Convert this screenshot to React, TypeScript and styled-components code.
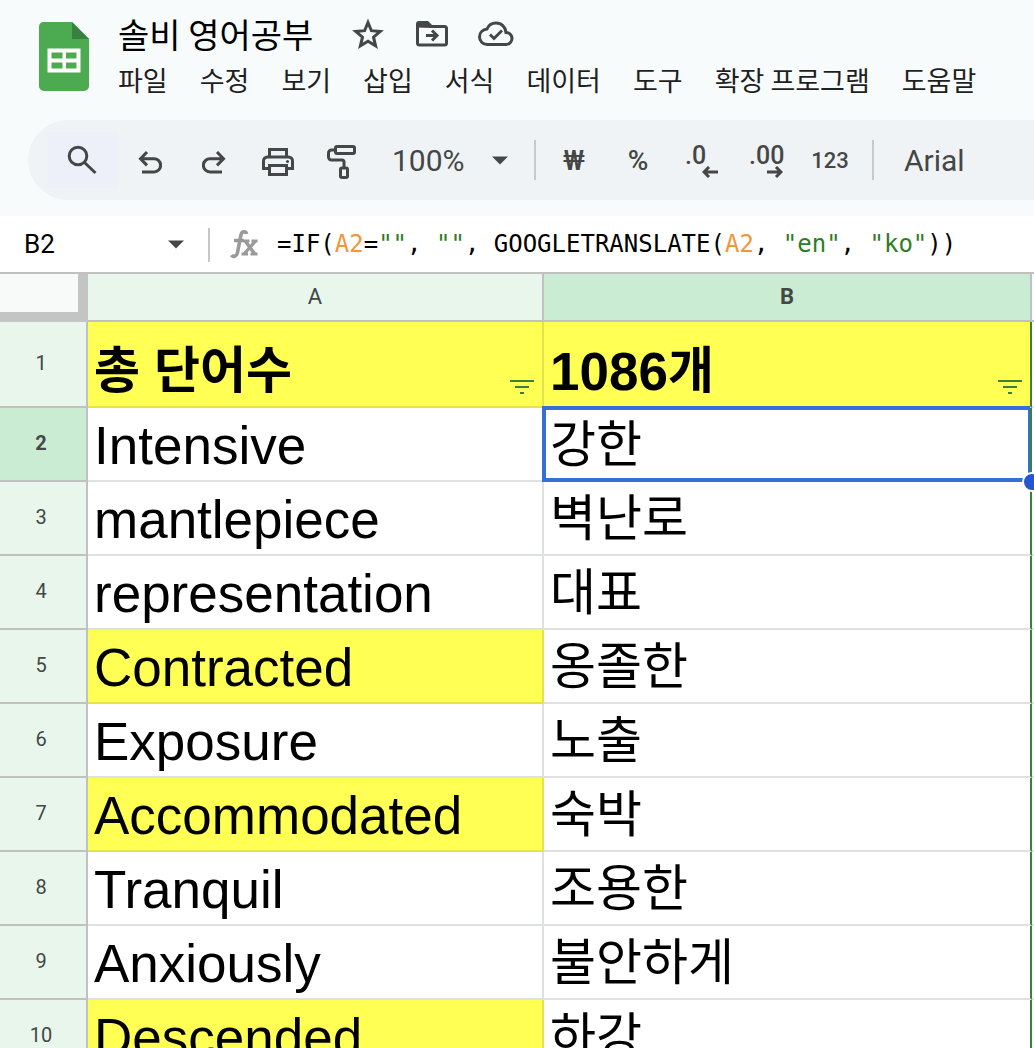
import React from "react";
import styled, { createGlobalStyle, css } from "styled-components";

const korean = `"Noto Sans CJK KR", sans-serif`;
const ui = `Roboto, "Noto Sans CJK KR", sans-serif`;
const ink = "#444746";
const line = "#c0c0c0";

const GlobalStyle = createGlobalStyle`
  *, *::before, *::after { box-sizing: border-box; }
  body { margin: 0; background: #fff; font-family: ${ui}; }
  button, input, select { font: inherit; color: inherit; }
  svg { display: block; flex: none; }
`;

const Page = styled.div`
  display: flex;
  flex-direction: column;
  height: 100vh;
  overflow: hidden;
`;

const Top = styled.header`
  flex: none;
  background: #f8fbfc;
  padding-bottom: 16px;
`;

const TitleBar = styled.div`
  display: flex;
  gap: 28px;
  height: 120px;
  padding: 22px 0 0 38px;
`;

const HomeLink = styled.a`
  display: block;
  height: 70px;
`;

const TitleColumn = styled.div`
  display: flex;
  flex-direction: column;
  margin-top: -11px;
`;

const TitleRow = styled.div`
  display: flex;
  align-items: center;
  height: 46px;
`;

const TitleInput = styled.input`
  width: 218px;
  height: 46px;
  padding: 0;
  border: 0;
  background: transparent;
  color: #000;
  font: 34px/46px ${korean};
`;

const plain = css`
  display: flex;
  align-items: center;
  justify-content: center;
  flex: none;
  padding: 0;
  border: 0;
  background: transparent;
  color: ${ink};
  cursor: pointer;
`;

const TitleButton = styled.button`
  ${plain}
  width: 64px;
  height: 46px;
`;

const Menu = styled.nav`
  display: flex;
  gap: 32px;
  height: 46px;
`;

const MenuButton = styled.button`
  ${plain}
  color: #1f1f1f;
  font: 27px/46px ${korean};
  white-space: nowrap;
`;

const Toolbar = styled.div`
  display: flex;
  align-items: center;
  height: 80px;
  margin-left: 28px;
  padding-left: 20px;
  border-radius: 40px 0 0 40px;
  background: #f0f3f5;
  color: ${ink};
  overflow: hidden;
`;

const Tool = styled.button<{ $search?: boolean; $size?: number }>`
  ${plain}
  width: ${(p) => (p.$search ? 70 : 64)}px;
  height: 56px;
  background: ${(p) => (p.$search ? "#eef0f9" : "transparent")};
  font-size: ${(p) => p.$size ?? 24}px;
  font-weight: 500;
`;

const IconTool = styled(Tool)`
  padding-top: 4px;
`;

const Divider = styled.span`
  flex: none;
  width: 2px;
  height: 40px;
  margin: 0 6px 0 10px;
  background: #c7c9cb;
`;

const Picker = styled.label<{ $indent: number; $size: number }>`
  display: grid;
  align-items: center;
  flex: none;
  width: 150px;
  padding-left: ${(p) => p.$indent}px;
  font-size: ${(p) => p.$size}px;

  > * { grid-area: 1 / 1; }
  > svg { justify-self: end; margin-right: 16px; pointer-events: none; }
`;

const Select = styled.select`
  appearance: none;
  width: 100%;
  height: 56px;
  padding: 0;
  border: 0;
  background: transparent;
  color: ${ink};
  cursor: pointer;
`;

const Decimal = styled.span`
  display: flex;
  flex-direction: column;
  width: 34px;
  padding-top: 4px;
  font-size: 25px;
  line-height: 20px;
  text-align: left;

  > svg { align-self: flex-end; }
`;

const FormulaBar = styled.div`
  display: flex;
  align-items: center;
  flex: none;
  height: 58px;
  border-bottom: 2px solid ${line};
  background: #fff;
`;

const NameBox = styled.input`
  width: 160px;
  height: 56px;
  padding: 0 0 0 24px;
  border: 0;
  background: transparent;
  color: #000;
  font-size: 26px;
`;

const NameButton = styled.button`
  ${plain}
  width: 32px;
  height: 56px;
`;

const FormulaDivider = styled.span`
  width: 2px;
  height: 34px;
  margin: 2px 20px 0 16px;
  background: #c7c7c7;
`;

const Formula = styled.div`
  margin-left: 19px;
  color: #000;
  font: 24px/56px "DejaVu Sans Mono", monospace;
  white-space: pre;
  outline: none;
`;

const Ref = styled.span`
  color: #f1963a;
`;

const Str = styled.span`
  color: #2e7d1f;
`;

const Sheet = styled.main`
  flex: 1;
  min-height: 0;
  overflow: hidden;
`;

const Table = styled.table`
  width: 100%;
  table-layout: fixed;
  border-collapse: separate;
  border-spacing: 0;
`;

const Col = styled.col<{ $width?: number }>`
  width: ${(p) => (p.$width ? `${p.$width}px` : "auto")};
`;

const Corner = styled.td`
  height: 48px;
  padding: 0;
  border: solid #c4c4c4;
  border-width: 0 10px 10px 0;
  background: #f8f9f9;
`;

const Head = styled.th<{ $active?: boolean }>`
  padding: 0;
  border: solid ${line};
  border-width: 0 2px 2px 0;
  background: ${(p) => (p.$active ? "#caecd2" : "#e8f6ec")};
  color: ${ink};
  font-weight: ${(p) => (p.$active ? 700 : 400)};
`;

const ColumnHead = styled(Head)`
  height: 48px;
  padding-bottom: 2px;
  font-size: 22px;
`;

const RowHead = styled(Head)`
  padding: 0 4px 2px 0;
  font-size: 20px;
`;

const HeadRest = styled.td`
  padding: 0;
  border-bottom: 2px solid ${line};
  background: #f8fbfc;
`;

const CellRest = styled.td`
  padding: 0;
  border-bottom: 2px solid #dfe0e0;
`;

const Cell = styled.td<{ $yellow?: boolean; $filterEdge?: boolean }>`
  position: relative;
  padding: 0 0 0 6px;
  border: solid ${(p) => (p.$yellow ? "#e3e34c" : "#dfe0e0")};
  border-width: 0 2px 2px 0;
  border-right-color: ${(p) => (p.$filterEdge ? "#3c7f3a" : p.$yellow ? "#e3e34c" : "#dfe0e0")};
  background: ${(p) => (p.$yellow ? "#ffff54" : "#fff")};
`;

const Content = styled.div<{ $header?: boolean }>`
  display: flex;
  align-items: flex-end;
  justify-content: space-between;
  height: ${(p) => (p.$header ? 84 : 72)}px;
  color: #000;
  font-family: "Liberation Sans", "Noto Sans CJK KR", sans-serif;
  font-size: 53px;
  font-weight: ${(p) => (p.$header ? 700 : 400)};
  line-height: 60px;
  white-space: nowrap;
`;

const CellText = styled.span`
  height: 64px;
`;

const Hangul = styled.span`
  font-size: 50px;
  line-height: 1;
  vertical-align: 2px;
`;

const FilterButton = styled.button`
  ${plain}
  width: 24px;
  height: 16px;
  margin: 0 8px 11px 0;
`;

const Selection = styled.div`
  position: absolute;
  z-index: 1;
  inset: -2px 0 -2px -2px;
  border: 4px solid #3570d8;
  border-right-width: 2px;
  pointer-events: none;
`;

const FillHandle = styled.div`
  position: absolute;
  z-index: 2;
  right: -12px;
  bottom: -12px;
  width: 20px;
  height: 20px;
  border: 2px solid #fff;
  border-radius: 50%;
  background: #2158cf;
`;

const SheetsLogo = () => (
  <svg width="52" height="69" viewBox="0 0 52 69" aria-hidden="true">
    <path d="M5 0H34L51 17V64a5 5 0 0 1-5 5H6a5 5 0 0 1-5-5V5a5 5 0 0 1 4-5Z" fill="#4caa50" />
    <path d="M34 0L51 17H34Z" fill="#388140" />
    <path
      fillRule="evenodd"
      fill="#fff"
      d="M9.500 26.500h33v24h-33zM13.500 30.500v6h11v-6zM28 30.500v6h10.500v-6zM13.500 40.500v6h11v-6zM28 40.500v6h10.500v-6z"
    />
  </svg>
);

const StarIcon = () => (
  <svg width="32" height="32" viewBox="0 0 32 32" fill="none" stroke="currentColor" strokeWidth="3">
    <path d="M16 4.500l3.400 8.200 8.800.8-6.700 5.700 2.100 8.600-7.600-4.600-7.600 4.600 2.100-8.600-6.700-5.700 8.800-.8z" />
  </svg>
);

const MoveIcon = () => (
  <svg width="32" height="26" viewBox="0 0 32 26" fill="none" stroke="currentColor" strokeWidth="3">
    <path d="M1.500 5V22a2 2 0 0 0 2 2H28.500a2 2 0 0 0 2-2V7.500a2 2 0 0 0-2-2H15" />
    <path d="M0 6.500V3a3 3 0 0 1 3-3h9l4 4v3z" fill="currentColor" stroke="none" />
    <path d="M10 14.500h10M16 9.500l5 5-5 5" />
  </svg>
);

const CloudIcon = () => (
  <svg width="36" height="26" viewBox="0 0 36 26" fill="none" stroke="currentColor" strokeWidth="3">
    <path d="M9 23.500h19a6 6 0 0 0 6-6c0-3.500-2.500-5.800-6-6-.5-5.500-4.500-9.500-10-9.500-4 0-7.500 2.300-9 6-4.200.6-7.500 3.500-7.500 7.700 0 4.500 3.300 7.800 7.500 7.800z" />
    <path d="M12 13.500l4 4 8-8" />
  </svg>
);

const SearchIcon = () => (
  <svg width="32" height="30" viewBox="0 0 32 30" fill="none" stroke="currentColor" strokeWidth="3">
    <circle cx="11" cy="11" r="8.800" />
    <path d="M17.500 17.500L28.500 28" />
  </svg>
);

const UndoIcon = ({ flip }: { flip?: boolean }) => (
  <svg width="24" height="26" viewBox="0 0 24 26" fill="none" stroke="currentColor" strokeWidth="3">
    <g transform={flip ? "translate(24 0) scale(-1 1)" : undefined}>
      <path d="M9 3l-6.500 6.700L9 16.400M3 9.700h13a6.600 6.600 0 0 1 0 13.200H4" />
    </g>
  </svg>
);

const PrintIcon = () => (
  <svg width="32" height="28" viewBox="0 0 32 28" fill="none" stroke="currentColor" strokeWidth="3">
    <path d="M7.500 9V1.500h17V9M7.500 20.500h-6V13a4 4 0 0 1 4-4h21a4 4 0 0 1 4 4v7.500h-6" />
    <path d="M7.500 17.500h17v9h-17z" />
    <circle cx="25.500" cy="13.500" r="1.500" fill="currentColor" stroke="none" />
  </svg>
);

const PaintIcon = () => (
  <svg width="30" height="34" viewBox="0 0 30 34" fill="none" stroke="currentColor" strokeWidth="3">
    <rect x="8.500" y="1.500" width="19" height="7" rx="1.500" />
    <path d="M8 5H4.500a3 3 0 0 0-3 3v4a3 3 0 0 0 3 3H15a2 2 0 0 1 2 2v5.500" />
    <rect x="13.500" y="23" width="7" height="9.500" rx="1.500" />
  </svg>
);

const Caret = () => (
  <svg width="16" height="9" viewBox="0 0 16 9" fill={ink} aria-hidden="true">
    <path d="M0 0.500H16L8 8.500Z" />
  </svg>
);

const ArrowIcon = ({ right }: { right?: boolean }) => (
  <svg width="17" height="12" viewBox="0 0 17 12" fill="none" stroke="currentColor" strokeWidth="3">
    <path d={right ? "M1 6h14M10 1l5 5-5 5" : "M16 6H2M7 1L2 6l5 5"} />
  </svg>
);

const FxIcon = () => (
  <svg width="28" height="30" viewBox="0 0 28 30" fill="none" stroke="#9a9a9a" strokeWidth="3.600">
    <path d="M16.500 5c-.4-3-4.500-3.200-5.500.6L7.500 23.500c-.8 4-4.500 5-6 2.500M4 11.500h10" />
    <path d="M15.500 12.500l9 12M25 12.500l-10.500 12" strokeWidth="3.400" />
    <path d="M13.500 12h6M21.500 12h6M11.500 25h6.500M20.500 25h7" strokeWidth="3" />
  </svg>
);

const FilterIcon = () => (
  <svg width="24" height="16" viewBox="0 0 24 16" fill="#3c7f3a">
    <path d="M0 1h24v2H0zM5 7h14v2H5zM10 13h4v2h-4z" />
  </svg>
);

const menus = ["파일", "수정", "보기", "삽입", "서식", "데이터", "도구", "확장 프로그램", "도움말"];

const words: { en: string; ko: string; marked?: boolean }[] = [
  { en: "Intensive", ko: "강한" },
  { en: "mantlepiece", ko: "벽난로" },
  { en: "representation", ko: "대표" },
  { en: "Contracted", ko: "옹졸한", marked: true },
  { en: "Exposure", ko: "노출" },
  { en: "Accommodated", ko: "숙박", marked: true },
  { en: "Tranquil", ko: "조용한" },
  { en: "Anxiously", ko: "불안하게" },
  { en: "Descended", ko: "하강", marked: true },
];

export default function App() {
  return (
    <Page>
      <GlobalStyle />
      <Top>
        <TitleBar>
          <HomeLink href="#" aria-label="Sheets">
            <SheetsLogo />
          </HomeLink>
          <TitleColumn>
            <TitleRow>
              <TitleInput aria-label="제목" defaultValue="솔비 영어공부" />
              <TitleButton aria-label="별표"><StarIcon /></TitleButton>
              <TitleButton aria-label="이동"><MoveIcon /></TitleButton>
              <TitleButton aria-label="저장됨"><CloudIcon /></TitleButton>
            </TitleRow>
            <Menu>
              {menus.map((m) => (
                <MenuButton key={m}>{m}</MenuButton>
              ))}
            </Menu>
          </TitleColumn>
        </TitleBar>
        <Toolbar role="toolbar">
          <Tool $search aria-label="검색"><SearchIcon /></Tool>
          <IconTool aria-label="실행취소"><UndoIcon /></IconTool>
          <IconTool aria-label="재실행"><UndoIcon flip /></IconTool>
          <IconTool aria-label="인쇄"><PrintIcon /></IconTool>
          <IconTool aria-label="서식 복사"><PaintIcon /></IconTool>
          <Picker $indent={18} $size={30}>
            <Select aria-label="확대/축소" defaultValue="100%">
              <option>100%</option>
            </Select>
            <Caret />
          </Picker>
          <Divider />
          <Tool $size={28}>₩</Tool>
          <Tool $size={28}>%</Tool>
          <Tool>
            <Decimal>.0<ArrowIcon /></Decimal>
          </Tool>
          <Tool>
            <Decimal>.00<ArrowIcon right /></Decimal>
          </Tool>
          <Tool $size={22}>123</Tool>
          <Divider />
          <Picker $indent={24} $size={30}>
            <Select aria-label="글꼴" defaultValue="Arial">
              <option>Arial</option>
            </Select>
          </Picker>
        </Toolbar>
      </Top>
      <FormulaBar>
        <NameBox aria-label="이름 상자" defaultValue="B2" />
        <NameButton aria-label="이름 목록"><Caret /></NameButton>
        <FormulaDivider />
        <FxIcon />
        <Formula role="textbox" aria-label="수식" contentEditable suppressContentEditableWarning spellCheck={false}>
          =IF(<Ref>A2</Ref>=<Str>""</Str>, <Str>""</Str>, GOOGLETRANSLATE(<Ref>A2</Ref>, <Str>"en"</Str>, <Str>"ko"</Str>))
        </Formula>
      </FormulaBar>
      <Sheet>
        <Table>
          <colgroup>
            <Col $width={88} />
            <Col $width={456} />
            <Col $width={488} />
            <Col />
          </colgroup>
          <thead>
            <tr>
              <Corner />
              <ColumnHead scope="col">A</ColumnHead>
              <ColumnHead scope="col" $active>B</ColumnHead>
              <HeadRest />
            </tr>
          </thead>
          <tbody>
            <tr>
              <RowHead scope="row">1</RowHead>
              <Cell $yellow>
                <Content $header>
                  <CellText><Hangul>총 단어수</Hangul></CellText>
                  <FilterButton aria-label="A 필터"><FilterIcon /></FilterButton>
                </Content>
              </Cell>
              <Cell $yellow $filterEdge>
                <Content $header>
                  <CellText>1086<Hangul>개</Hangul></CellText>
                  <FilterButton aria-label="B 필터"><FilterIcon /></FilterButton>
                </Content>
              </Cell>
              <CellRest />
            </tr>
            {words.map((w, i) => (
              <tr key={w.en}>
                <RowHead scope="row" $active={i === 0}>{i + 2}</RowHead>
                <Cell $yellow={w.marked}>
                  <Content><CellText>{w.en}</CellText></Content>
                </Cell>
                <Cell $filterEdge>
                  <Content><CellText><Hangul>{w.ko}</Hangul></CellText></Content>
                  {i === 0 && (
                    <>
                      <Selection />
                      <FillHandle />
                    </>
                  )}
                </Cell>
                <CellRest />
              </tr>
            ))}
          </tbody>
        </Table>
      </Sheet>
    </Page>
  );
}
